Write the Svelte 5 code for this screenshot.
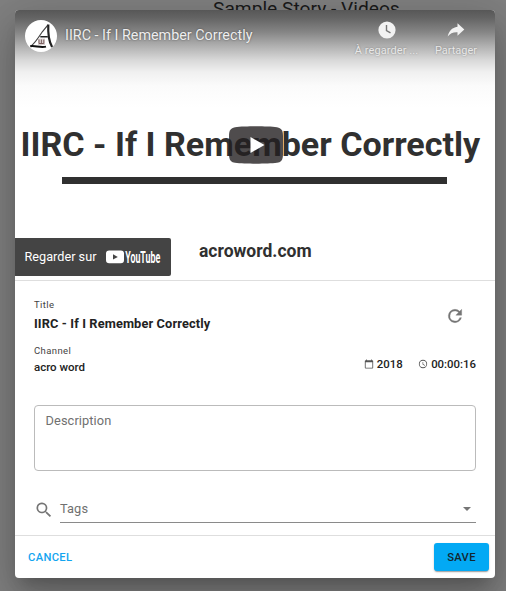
<script>
  const title = 'IIRC - If I Remember Correctly';
  const channel = 'acro word';
</script>

<div class="page">
  <div class="behind">Sample Story - Videos</div>
  <div class="dialog">
    <section class="video">
      <div class="shade"></div>
      <header class="bar">
        <svg class="avatar" viewBox="0 0 32 32" width="32" height="32">
          <circle cx="16" cy="16" r="16" fill="#fff" />
          <path d="M23 4.800 17.500 11.500C14 16.500 11 22 6.500 25.600" fill="none" stroke="#444" stroke-width="1.200" />
          <path d="M5.200 26.200C10 25.200 15 28 21 26.600" fill="none" stroke="#111" stroke-width="2" />
          <path d="M23.300 4.500c-.400 8 .700 17 3.800 22.500" fill="none" stroke="#222" stroke-width="2.200" />
          <path d="M15.300 16.800h7.500" stroke="#222" stroke-width="1.400" />
          <rect x="13" y="18.500" width="7" height="6.500" fill="#ddd3d3" />
          <path d="M14 19.500v4h4.800v-4M16.400 19.500v4" fill="none" stroke="#7d6262" stroke-width="1" />
        </svg>
        <span class="video-title">{title}</span>
        <div class="action later">
          <svg viewBox="0 0 18 18" width="18" height="18">
            <circle cx="9" cy="9" r="8.6" fill="#f2f2f2" />
            <path d="M8.500 4v5.700l4 2.200" fill="none" stroke="#777" stroke-width="1.400" />
          </svg>
          <span>À regarder ...</span>
        </div>
        <div class="action share">
          <svg viewBox="0 0 18 18" width="18" height="18">
            <path d="M10.500 2.300 17.300 8.600l-6.800 6.200v-3.600C6 11 3 12.400.7 15.600 1.700 10.400 4.800 6.600 10.500 5.800z" fill="#f2f2f2" />
          </svg>
          <span>Partager</span>
        </div>
      </header>
      <div class="slide-title">{title}</div>
      <div class="rule"></div>
      <div class="site">acroword.com</div>
      <svg class="play" viewBox="0 0 54 38" width="54" height="38">
        <path d="M6 1.200C16 0 38 0 48 1.200c3.600.500 5.500 2.600 5.800 5.800.600 7 .600 17 0 24-.300 3.200-2.200 5.300-5.800 5.800-10 1.200-32 1.200-42 0C2.400 36.300.500 34.200.200 31c-.600-7-.600-17 0-24C.500 3.800 2.400 1.700 6 1.200z" fill="#231f20" fill-opacity=".8" />
        <path d="M21.500 11v16L35.500 19z" fill="#fff" />
      </svg>
      <div class="watch">
        <span>Regarder sur</span>
        <svg viewBox="0 0 64 26" width="64" height="26">
          <rect x="0" y="6.400" width="18" height="12.800" rx="3.200" fill="#fff" />
          <path d="M7 10.200v5.400l4.800-2.700z" fill="#444" />
          <text x="19.200" y="18.500" textLength="35" lengthAdjust="spacingAndGlyphs">YouTube</text>
        </svg>
      </div>
    </section>

    <section class="form">
      <div class="row first">
        <div>
          <div class="label">Title</div>
          <div class="value name">{title}</div>
        </div>
        <svg class="refresh" viewBox="0 0 24 24" width="20" height="20">
          <path fill="#757575" stroke="#757575" stroke-width=".4" d="M17.650 6.350A7.960 7.960 0 0 0 12 4a8 8 0 1 0 7.730 10h-2.080A6 6 0 1 1 12 6c1.660 0 3.140.690 4.220 1.780L13 11h7V4z" />
        </svg>
      </div>
      <div class="row second">
        <div>
          <div class="label">Channel</div>
          <div class="value channel">{channel}</div>
        </div>
        <div class="meta">
          <svg viewBox="0 0 24 24" width="10" height="10">
            <path fill="#555" d="M20 3h-1V1h-2v2H7V1H5v2H4a2 2 0 0 0-2 2v16c0 1.100.900 2 2 2h16a2 2 0 0 0 2-2V5a2 2 0 0 0-2-2zm0 18H4V8h16z" />
          </svg>
          <span>2018</span>
          <svg class="clock" viewBox="0 0 24 24" width="10" height="10">
            <path fill="#555" d="M12 2a10 10 0 1 0 0 20 10 10 0 0 0 0-20zm0 18a8 8 0 1 1 0-16 8 8 0 0 1 0 16zm.500-13H11v6l5.200 3.200.800-1.300-4.500-2.700z" />
          </svg>
          <span>00:00:16</span>
        </div>
      </div>
      <div class="description">Description</div>
      <div class="tags">
        <svg viewBox="0 0 24 24" width="20" height="20">
          <path fill="#757575" d="M15.500 14h-.790l-.280-.270A6.500 6.500 0 1 0 13.730 14.430l.270.280v.790l5 4.990L20.490 19zm-6 0a4.500 4.500 0 1 1 0-9 4.500 4.500 0 0 1 0 9z" />
        </svg>
        <div class="select">
          <span>Tags</span>
          <i></i>
        </div>
      </div>
    </section>

    <footer>
      <button class="cancel">CANCEL</button>
      <button class="save">SAVE</button>
    </footer>
  </div>
</div>

<style>
  .page {
    position: relative;
    box-sizing: border-box;
    width: 506px;
    height: 591px;
    padding: 10px 11px 0 15px;
    overflow: hidden;
    background: #808080;
    font-family: Roboto, 'Liberation Sans', sans-serif;
  }
  .behind {
    position: absolute;
    top: -2px;
    left: 213px;
    font-size: 19.200px;
    line-height: 22px;
    color: #1a1a1a;
    white-space: nowrap;
  }
  .dialog {
    position: relative;
    display: flex;
    flex-direction: column;
    width: 480px;
    height: 568px;
    overflow: hidden;
    border-radius: 4px;
    background: #fff;
    box-shadow: 0 11px 15px -7px rgba(0, 0, 0, .2), 0 24px 38px 3px rgba(0, 0, 0, .14), 0 9px 46px 8px rgba(0, 0, 0, .12);
  }
  .video {
    position: relative;
    box-sizing: border-box;
    height: 271px;
    border-bottom: 1px solid #dedede;
  }
  .shade {
    position: absolute;
    inset: 0 0 auto;
    height: 98px;
    background: linear-gradient(#575757 0, #646464 8px, #858585 22px, #b0b0b0 36px, #d8d8d8 50px, #f0f0f0 62px, #fbfbfb 76px, #fff 98px);
  }
  .bar {
    position: relative;
    display: flex;
    height: 60px;
    padding-left: 10px;
    color: #eee;
  }
  .avatar {
    margin-top: 10px;
  }
  .video-title {
    margin: 16px 0 0 8px;
    width: 280px;
    font-size: 14.350px;
    line-height: 20px;
    text-shadow: 0 0 2px rgba(0, 0, 0, .5);
    white-space: nowrap;
  }
  .action {
    display: flex;
    flex-direction: column;
    align-items: center;
    gap: 5px;
    padding-top: 11px;
    font-size: 11px;
    line-height: 13px;
    color: #e8e8e8;
    text-shadow: 0 0 2px rgba(0, 0, 0, .35);
    white-space: nowrap;
  }
  .later {
    width: 83px;
  }
  .later span {
    letter-spacing: .1px;
  }
  .share {
    width: 56px;
  }
  .slide-title {
    margin: 53px 0 0 5.500px;
    height: 42px;
    font-size: 34.100px;
    font-weight: 700;
    line-height: 42px;
    color: #303030;
    white-space: nowrap;
  }
  .rule {
    width: 385px;
    height: 7px;
    margin: 12px 0 0 47px;
    background: #303030;
  }
  .site {
    margin: 56px 0 0 184px;
    font-size: 17.500px;
    font-weight: 700;
    line-height: 22px;
    color: #303030;
  }
  .play {
    position: absolute;
    left: 213.500px;
    top: 116px;
  }
  .watch {
    position: absolute;
    left: 0;
    top: 228px;
    display: flex;
    align-items: center;
    box-sizing: border-box;
    width: 156px;
    height: 38px;
    padding-left: 9.500px;
    border-radius: 0 2px 2px 0;
    background: #444;
    color: #fff;
    font-size: 12.700px;
  }
  .watch span {
    width: 81.500px;
    margin-top: -1px;
    white-space: nowrap;
  }
  .watch svg {
    flex: none;
    overflow: visible;
  }
  .watch text {
    font-family: Roboto, 'Liberation Sans', sans-serif;
    font-size: 16px;
    font-weight: 700;
    fill: #fff;
  }
  .form {
    box-sizing: border-box;
    height: 254px;
    padding: 18px 19px 0;
  }
  .row {
    display: flex;
    justify-content: space-between;
    height: 46px;
  }
  .second {
    height: 60px;
  }
  .label {
    font-size: 9.500px;
    line-height: 12px;
    letter-spacing: .4px;
    color: #444;
  }
  .value {
    font-weight: 700;
    color: #222;
    white-space: nowrap;
  }
  .name {
    margin-top: 5px;
    font-size: 12.800px;
    line-height: 16px;
    letter-spacing: .12px;
  }
  .channel {
    margin-top: 3px;
    font-size: 11.500px;
    font-weight: 500;
    line-height: 14px;
  }
  .refresh {
    margin: 7px 11px 0 0;
  }
  .meta {
    display: flex;
    align-items: center;
    gap: 3px;
    height: 14px;
    margin-top: 12px;
    font-size: 11.400px;
    font-weight: 500;
    color: #222;
  }
  .clock {
    margin-left: 12.500px;
  }
  .description {
    box-sizing: border-box;
    height: 66px;
    padding: 7px 10.500px;
    border: 1px solid #bbb;
    border-radius: 4px;
    color: #707070;
    font-size: 12.800px;
    line-height: 16px;
    letter-spacing: .1px;
  }
  .tags {
    display: flex;
    align-items: flex-end;
    height: 52px;
    gap: 6.500px;
  }
  .tags svg {
    margin: 0 0 3px -.500px;
  }
  .select {
    display: flex;
    flex: 1;
    align-items: center;
    justify-content: space-between;
    height: 27px;
    padding-right: 5.500px;
    border-bottom: 1px solid #8a8a8a;
    color: #707070;
    font-size: 12.800px;
    letter-spacing: .1px;
  }
  .select i {
    border: 4px solid transparent;
    border-top-color: #757575;
    border-bottom: 0;
  }
  footer {
    display: flex;
    align-items: center;
    justify-content: space-between;
    box-sizing: border-box;
    height: 43px;
    padding: 0 6px 0 13px;
    border-top: 1px solid #dedede;
  }
  button {
    padding: 0;
    border: 0;
    background: none;
    font: 500 11.200px Roboto, 'Liberation Sans', sans-serif;
    letter-spacing: .35px;
  }
  .cancel {
    color: #13a5f0;
  }
  .save {
    width: 55px;
    height: 28px;
    border-radius: 3px;
    background: #03a9f4;
    color: #132630;
    box-shadow: 0 2px 1px -1px rgba(0, 0, 0, .2), 0 1px 2px rgba(0, 0, 0, .24);
  }
</style>
